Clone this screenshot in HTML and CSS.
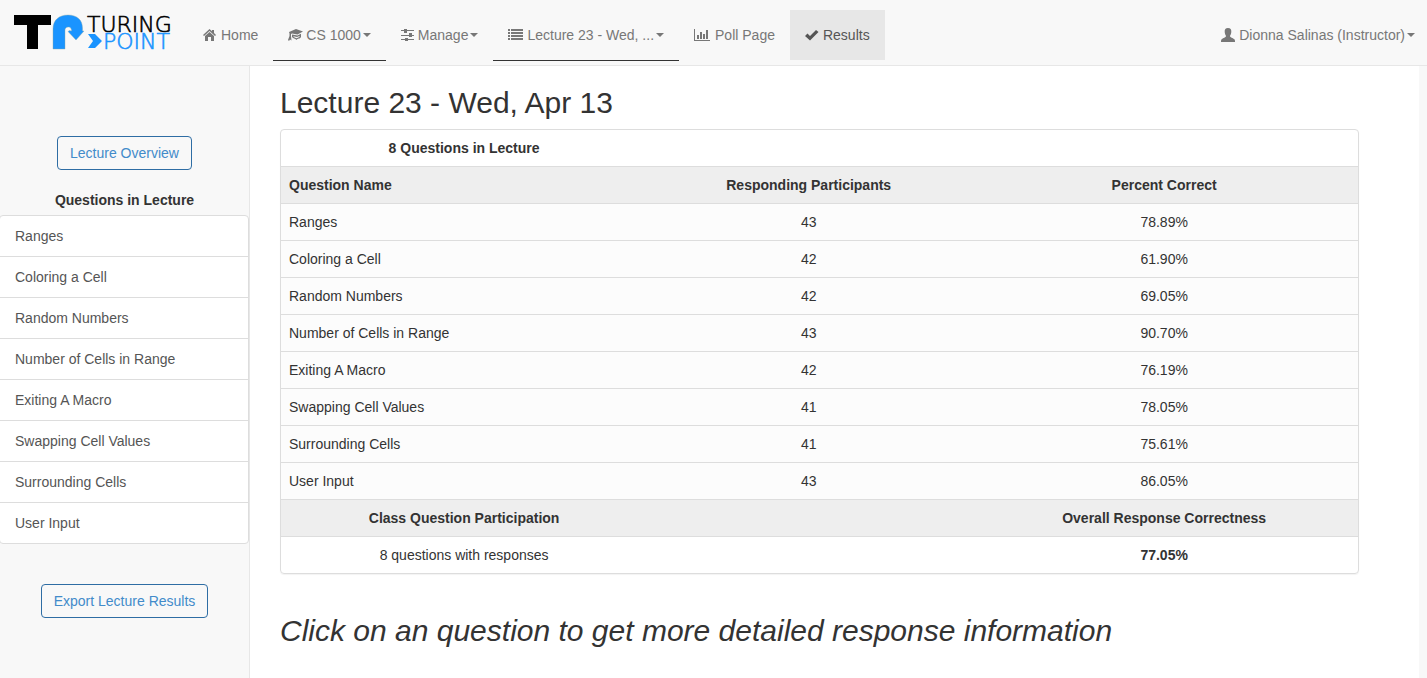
FILE: index.html
```html
<!DOCTYPE html>
<html lang="en">
<head>
<meta charset="utf-8">
<title>Turing Point - Results</title>
<link rel="stylesheet" href="styles.css">
</head>
<body>
<header class="navbar">
  <a class="brand" href="#" aria-label="Turing Point">
    <svg width="162" height="40" viewBox="0 0 162 40">
      <rect x="0" y="1" width="37" height="10" fill="#000"/>
      <rect x="13" y="1" width="11" height="34" fill="#000"/>
      <path d="M39 35V15C39 6 45 1 54 1C63 1 68.500 6 68.500 14V17H70L62 26L54 17.500L55.500 16.500L57.500 17C57.500 14.500 56.500 13 54.500 13C52 13 51 14.500 51 16V35Z" fill="#1a94ff" stroke="#8aa" stroke-width=".4"/>
      <path d="M74 20H81L88 27L81 34H74L79 27Z" fill="#1a94ff"/>
      <text class="logo-text" x="73" y="18" fill="#000" stroke="#000">TURING</text>
      <text class="logo-text" x="89" y="35" fill="#1a94ff" stroke="#1a94ff">POINT</text>
    </svg>
  </a>
  <nav class="nav">
    <a class="nav-item" href="#"><svg width="14" height="14" viewBox="0 0 14 14"><path d="M6.500 1L9 3.300V2H11V5L13 7L12 8L6.500 3L1 8L0 7Z"/><path d="M6.500 4L11 8V13H8V9H5V13H2V8Z"/></svg><span>Home</span></a>
    <button class="nav-item underlined" type="button"><svg width="14" height="14" viewBox="0 0 14 14"><path d="M1 4L8 1L15 3.500L9.500 6.500L4 5.500L3 6V8L3.500 12.500L2 11.500L1 13L0 12L1.500 8V5.500Z"/><path d="M4 6.500L9.500 7.500L13 5.700V9C11.500 11.500 10 9.800 8.500 12C7 10 5.500 11 4 9ZM5.500 8.300V9L8.500 10.200L11.500 9V8L9 9Z" fill-rule="evenodd"/></svg><span>CS 1000</span><i class="caret"></i></button>
    <button class="nav-item" type="button"><svg width="13" height="14" viewBox="0 0 13 14"><path d="M0 2H3V1H6V2H13V3H6V5H3V3H0ZM0 7H8V5H11V7H13V8H11V9H8V8H0ZM0 11H4V10H7V11H13V12H7V13H4V12H0Z"/></svg><span>Manage</span><i class="caret"></i></button>
    <button class="nav-item underlined" type="button"><svg width="15" height="14" viewBox="0 0 15 14"><path d="M0 1H2V3H0ZM3 1H15V3H3ZM0 4H2V6H0ZM3 4H15V6H3ZM0 7H2V9H0ZM3 7H15V9H3ZM0 10H2V12H0ZM3 10H15V12H3Z"/></svg><span>Lecture 23 - Wed, ...</span><i class="caret"></i></button>
    <a class="nav-item" href="#"><svg width="17" height="14" viewBox="0 0 17 14"><path d="M0 1H1V12H16V13H0ZM3 7H5V11H3ZM6 4H8V11H6ZM9 6H11V11H9ZM12 2H14V11H12Z"/></svg><span>Poll Page</span></a>
    <a class="nav-item active" href="#" aria-current="page"><svg width="14" height="14" viewBox="0 0 14 14"><path d="M0 8L2.500 5.500L5 8L11 2L13.500 4L5 12.500Z"/></svg><span>Results</span></a>
  </nav>
  <button class="nav-item user" type="button"><svg width="14" height="14" viewBox="0 0 14 14"><path d="M7 0C9.500 0 10.500 1.500 10.300 4C10.200 6 9.300 7 9 8C9 9.500 12 10 13 11C14 11.500 14 12.500 14 14H0C0 12.500 0 11.500 1 11C2 10 5 9.500 5 8C4.700 7 3.800 6 3.700 4C3.500 1.500 4.500 0 7 0Z"/></svg><span>Dionna Salinas (Instructor)</span><i class="caret"></i></button>
</header>
<div class="page">
  <aside class="sidebar">
    <button class="btn" type="button">Lecture Overview</button>
    <strong class="list-title">Questions in Lecture</strong>
    <nav class="list">
      <a href="#">Ranges</a>
      <a href="#">Coloring a Cell</a>
      <a href="#">Random Numbers</a>
      <a href="#">Number of Cells in Range</a>
      <a href="#">Exiting A Macro</a>
      <a href="#">Swapping Cell Values</a>
      <a href="#">Surrounding Cells</a>
      <a href="#">User Input</a>
    </nav>
    <button class="btn" type="button">Export Lecture Results</button>
  </aside>
  <main class="content">
    <h2>Lecture 23 - Wed, Apr 13</h2>
    <div class="panel">
      <table>
        <colgroup><col class="col-name"><col class="col-count"><col class="col-percent"></colgroup>
        <tbody>
        <tr><th>8 Questions in Lecture</th><td></td><td></td></tr>
        <tr class="shade"><th class="left">Question Name</th><th>Responding Participants</th><th>Percent Correct</th></tr>
        <tr class="row"><td class="left">Ranges</td><td>43</td><td>78.89%</td></tr>
        <tr class="row"><td class="left">Coloring a Cell</td><td>42</td><td>61.90%</td></tr>
        <tr class="row"><td class="left">Random Numbers</td><td>42</td><td>69.05%</td></tr>
        <tr class="row"><td class="left">Number of Cells in Range</td><td>43</td><td>90.70%</td></tr>
        <tr class="row"><td class="left">Exiting A Macro</td><td>42</td><td>76.19%</td></tr>
        <tr class="row"><td class="left">Swapping Cell Values</td><td>41</td><td>78.05%</td></tr>
        <tr class="row"><td class="left">Surrounding Cells</td><td>41</td><td>75.61%</td></tr>
        <tr class="row"><td class="left">User Input</td><td>43</td><td>86.05%</td></tr>
        <tr class="shade"><th>Class Question Participation</th><td></td><th>Overall Response Correctness</th></tr>
        <tr><td>8 questions with responses</td><td></td><th>77.05%</th></tr>
        </tbody>
      </table>
    </div>
    <p class="hint"><em>Click on an question to get more detailed response information</em></p>
  </main>
</div>
</body>
</html>
```

FILE: styles.css
```css
* { box-sizing: border-box; }
body {
  margin: 0;
  min-height: 100vh;
  display: flex;
  flex-direction: column;
  background: #f8f8f8;
  color: #333;
  font: 14px/20px "Liberation Sans", Arial, sans-serif;
}
a { text-decoration: none; color: inherit; }
button { font: inherit; cursor: pointer; }
.navbar {
  display: flex;
  align-items: flex-start;
  padding: 10px 0 4px 14px;
  border-bottom: 1px solid #e7e7e7;
}
.brand { display: flex; padding-top: 4px; margin-right: 12px; }
.brand svg { margin-bottom: -4px; }
svg { overflow: visible; }
.logo-text {
  font-family: "DejaVu Sans", sans-serif;
  font-size: 22px;
  font-weight: 200;
  stroke-width: .6px;
}
.nav { display: flex; }
.nav-item {
  display: flex;
  align-items: center;
  gap: 4px;
  padding: 15px 15px;
  border: 0;
  border-bottom: 1px solid transparent;
  background: none padding-box;
  color: #777;
  white-space: nowrap;
}
.nav-item svg { fill: currentColor; }
.underlined { border-bottom-color: #333; }
.active { color: #555; background-color: #e7e7e7; }
.caret {
  margin-left: -2px;
  border: 4px solid transparent;
  border-top-color: currentColor;
  border-bottom: 0;
}
.user { margin-left: auto; padding-right: 12px; }
.page { display: flex; flex: 1; padding-right: 8px; }
.sidebar {
  flex: 0 0 250px;
  display: flex;
  flex-direction: column;
  align-items: center;
  padding-top: 70px;
  border-right: 1px solid #e7e7e7;
}
.btn {
  padding: 6px 12px;
  border: 1px solid #2e6da4;
  border-radius: 4px;
  background: none;
  color: #428bca;
}
.list-title { margin: 20px 0 5px; }
.list {
  align-self: stretch;
  margin: 0 0 40px -1px;
  border: 1px solid #ddd;
  border-radius: 4px;
  background: #fff;
}
.list a { display: block; padding: 10px 15px; color: #555; }
.list a + a { border-top: 1px solid #ddd; }
.content { flex: 1; padding: 20px 60px 0 30px; background: #fff; }
h2 { margin: 0 0 10px; font-size: 30px; line-height: 33px; font-weight: 400; }
.panel {
  overflow: hidden;
  border: 1px solid #ddd;
  border-radius: 4px;
  box-shadow: 0 1px 1px rgba(0, 0, 0, .05);
}
table { width: 100%; table-layout: fixed; border-collapse: separate; border-spacing: 0; }
.col-name { width: 34%; }
.col-count { width: 30%; }
td, th { padding: 8px; text-align: center; }
tr + tr > * { border-top: 1px solid #ddd; }
.left { text-align: left; }
.shade { background: #eee; }
.row { background: #fcfcfc; }
.hint { margin: 40px 0 10px; font-size: 30px; line-height: 33px; }
```
